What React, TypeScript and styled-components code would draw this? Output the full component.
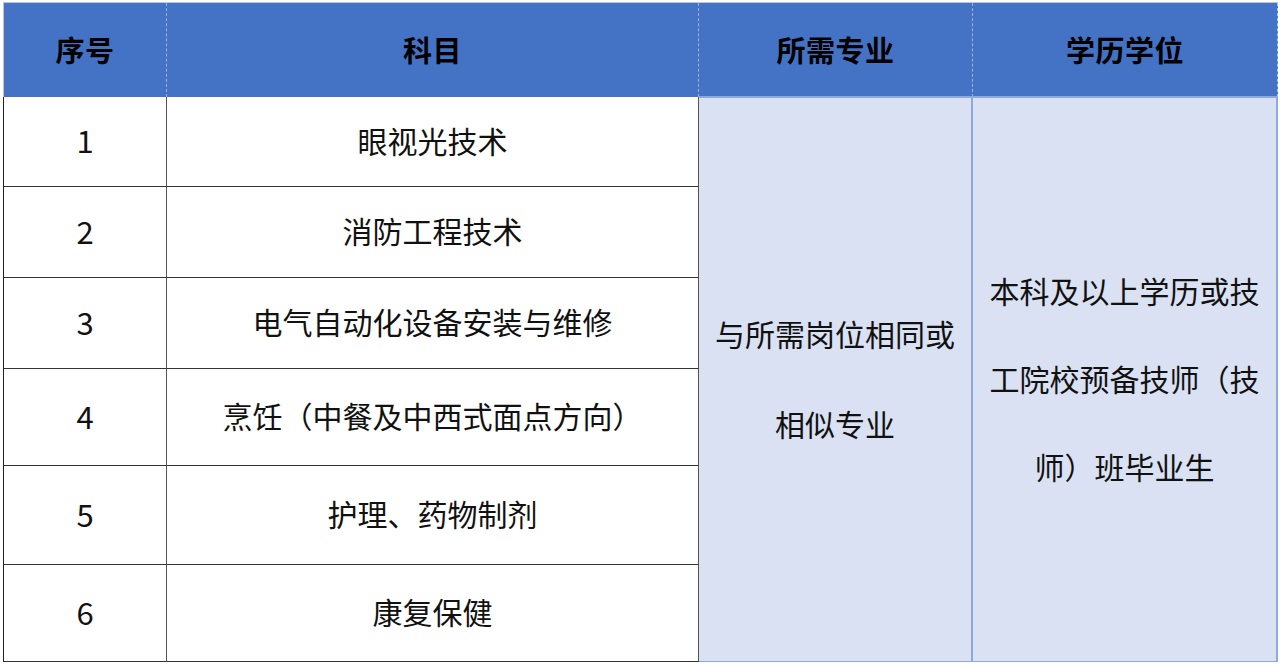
import { Fragment } from "react";
import styled, { createGlobalStyle } from "styled-components";

const GlobalStyle = createGlobalStyle`
  html, body {
    margin: 0;
    padding: 0;
    background: #ffffff;
  }
  body {
    font-family: "Noto Sans CJK SC", "Microsoft YaHei", sans-serif;
  }
`;

const Page = styled.div`
  padding: 2px 0 0 3px;
`;

const Grid = styled.div`
  display: grid;
  grid-template-columns: 163px 532px 274px 305px;
  grid-template-rows: 94px 90px 91px 91px 97px 99px 97px;
  width: 1274px;
  border-top: 1px solid #b4c6e7;
  border-left: 1px solid #b4c6e7;
`;

const HeadCell = styled.div<{ $last?: boolean }>`
  display: flex;
  align-items: center;
  justify-content: center;
  padding-bottom: 2px;
  background: #4472c4;
  color: #000;
  font-size: 29px;
  font-weight: 700;
  letter-spacing: 0.5px;
  border-right: 1px dashed ${(p) => (p.$last ? "#b4c6e7" : "#9db3e0")};
  box-sizing: border-box;
`;

const BodyCell = styled.div<{ $row: number; $col: number }>`
  grid-row: ${(p) => p.$row};
  grid-column: ${(p) => p.$col};
  display: flex;
  align-items: center;
  justify-content: center;
  padding-bottom: 4px;
  background: #ffffff;
  color: #111;
  font-size: 30px;
  border-right: 1px solid #555;
  border-bottom: 1px solid #333;
  box-sizing: border-box;
`;

const NumCell = styled(BodyCell)`
  font-size: 31px;
  border-left: 1px solid #222;
  margin-left: -1px;
`;

const MergedCell = styled.div<{ $col: number; $lh: number }>`
  grid-column: ${(p) => p.$col};
  grid-row: 2 / span 6;
  display: flex;
  align-items: center;
  justify-content: center;
  padding-bottom: 4px;
  text-align: center;
  background: #d9e1f2;
  color: #111;
  font-size: 30px;
  line-height: ${(p) => p.$lh}px;
  border-top: 2px solid #8eaadb;
  border-right: 2px solid #8eaadb;
  border-bottom: 2px solid #8eaadb;
  box-sizing: border-box;
  margin-top: -1px;
  margin-bottom: -1px;
`;

const rows = [
  "眼视光技术",
  "消防工程技术",
  "电气自动化设备安装与维修",
  "烹饪（中餐及中西式面点方向）",
  "护理、药物制剂",
  "康复保健",
];

export default function App() {
  return (
    <>
      <GlobalStyle />
      <Page>
        <Grid>
          <HeadCell>序号</HeadCell>
          <HeadCell>科目</HeadCell>
          <HeadCell>所需专业</HeadCell>
          <HeadCell $last>学历学位</HeadCell>
          {rows.map((name, i) => (
            <Fragment key={name}>
              <NumCell $row={i + 2} $col={1}>
                {i + 1}
              </NumCell>
              <BodyCell $row={i + 2} $col={2}>
                {name}
              </BodyCell>
            </Fragment>
          ))}
          <MergedCell $col={3} $lh={90}>
            <div>
              与所需岗位相同或
              <br />
              相似专业
            </div>
          </MergedCell>
          <MergedCell $col={4} $lh={88}>
            <div>
              本科及以上学历或技
              <br />
              工院校预备技师（技
              <br />
              师）班毕业生
            </div>
          </MergedCell>
        </Grid>
      </Page>
    </>
  );
}
